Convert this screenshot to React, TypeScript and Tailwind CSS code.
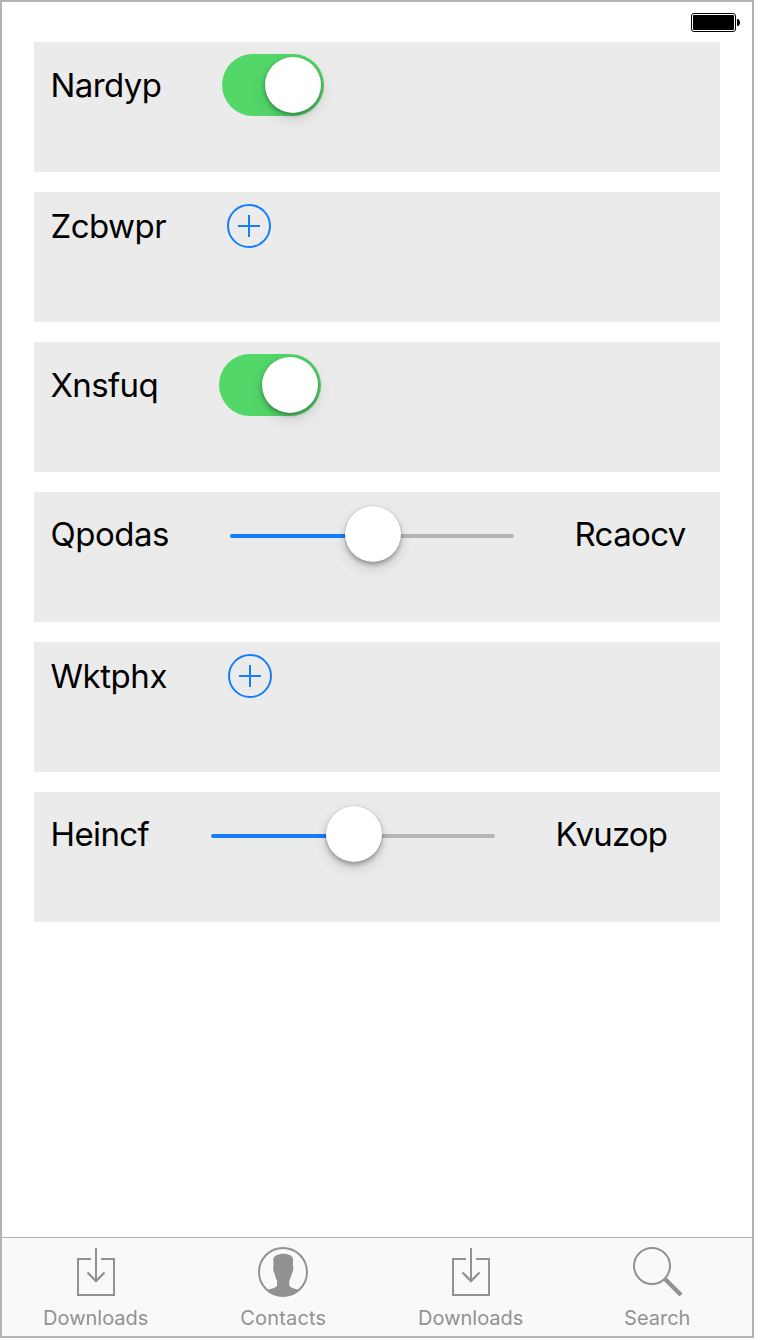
import type { ReactNode } from "react";

function Row({ children }: { children: ReactNode }) {
  return (
    <div className="flex h-[130px] items-start bg-[#ebebeb] pt-3 pl-4">
      <div className="flex items-center">{children}</div>
    </div>
  );
}

function Label({ text, className }: { text: string; className: string }) {
  return (
    <span className={`shrink-0 pl-[0.5px] text-[33px] leading-10 whitespace-nowrap text-black ${className}`}>
      {text}
    </span>
  );
}

function Toggle() {
  return (
    <div className="flex h-[62px] w-[102px] items-center justify-end rounded-full bg-[#53d769] pr-[3px]">
      <div className="size-14 rounded-full bg-white shadow-[0_6px_16px_rgba(0,0,0,0.13),0_2px_4px_rgba(0,0,0,0.35)]" />
    </div>
  );
}

function AddButton() {
  return (
    <svg className="size-11" viewBox="0 0 44 44" fill="none" stroke="#147efb" strokeWidth="2">
      <circle cx="22" cy="22" r="21" />
      <path d="M11 22H33M22 11V33" />
    </svg>
  );
}

function Slider() {
  return (
    <div className="flex h-[60px] w-[284px] items-center">
      <div className="mt-1 h-1 w-[115px] rounded-l-full bg-[#147efb]" />
      <div className="z-10 size-14 shrink-0 rounded-full bg-white shadow-[0_6px_14px_rgba(0,0,0,0.14),0_3px_4px_rgba(0,0,0,0.28),0_0_1px_rgba(0,0,0,0.3)]" />
      <div className="mt-1 h-1 flex-1 rounded-r-full bg-[#b5b5b5]" />
    </div>
  );
}

function DownloadIcon() {
  return (
    <svg className="size-[50px]" viewBox="0 0 50 50" fill="none" stroke="#929292" strokeWidth="2">
      <path d="M20 12H7V48H43V12H30" />
      <path d="M25 1V34" />
      <path d="M16.5 25.5L25 34L33.5 25.5" strokeWidth="2.3" />
    </svg>
  );
}

function ContactIcon() {
  return (
    <svg className="size-[50px]" viewBox="0 0 50 50">
      <circle cx="25" cy="25" r="24" fill="none" stroke="#929292" strokeWidth="2" />
      <path
        fill="#929292"
        d="M15.3 13C15.2 9 19.5 6.8 25.3 6.8S35.2 9 35.1 13L34.8 19.5C35.6 19.7 35.4 22 34.9 24C34.5 25.6 34.1 25.8 33.8 26.8C33.3 29.8 32.2 32 31.3 33.5V38C31.7 41 36 41.5 41.5 43C37 47.2 31.5 49 25 49S13 47.2 8.5 43C14 41.5 18.7 41 19.1 38V33.5C18.1 32 17 29.8 16.6 26.8C16.3 25.8 15.8 25.6 15.5 24C15 22 14.8 19.7 15.6 19.5Z"
      />
    </svg>
  );
}

function SearchIcon() {
  return (
    <svg className="size-[50px]" viewBox="0 0 50 50" fill="none" stroke="#929292">
      <circle cx="19" cy="19" r="18" strokeWidth="2" />
      <path d="M32 32L48 48" strokeWidth="4.2" />
    </svg>
  );
}

function Tab({ icon, label, className }: { icon: ReactNode; label: string; className: string }) {
  return (
    <div className="flex flex-1 flex-col items-center pt-[9px] text-[#929292]">
      {icon}
      <span className={`mt-[9px] text-[20px] leading-6 ${className}`}>{label}</span>
    </div>
  );
}

export default function App() {
  return (
    <div className="h-[1340px] w-[760px] bg-white font-['Inter',sans-serif]">
      <div className="flex h-[1338px] w-[754px] flex-col border-2 border-[#b3b3b3] bg-white">
        <div className="flex h-10 justify-end pt-[11px] pr-3">
          <svg className="h-[19px] w-[49px]" viewBox="0 0 49 19">
            <rect x="0.5" y="0.5" width="44" height="18" rx="2.5" fill="none" stroke="#000" />
            <rect x="2" y="2" width="41" height="15" rx="1" />
            <path d="M46 6H47Q49 6.5 49 9.5T47 13H46Z" />
          </svg>
        </div>
        <div className="flex flex-1 flex-col gap-5 pr-8 pl-8">
          <Row>
            <Label text="Nardyp" className="w-[172px] tracking-[-0.6px]" />
            <Toggle />
          </Row>
          <Row>
            <Label text="Zcbwpr" className="w-[177px] tracking-[-0.55px]" />
            <AddButton />
          </Row>
          <Row>
            <Label text="Xnsfuq" className="w-[169px] tracking-[-0.65px]" />
            <Toggle />
          </Row>
          <Row>
            <Label text="Qpodas" className="w-[180px] tracking-[-0.5px]" />
            <Slider />
            <Label text="Rcaocv" className="ml-[60px] tracking-[-0.65px]" />
          </Row>
          <Row>
            <Label text="Wktphx" className="w-[178px] tracking-[-0.45px]" />
            <AddButton />
          </Row>
          <Row>
            <Label text="Heincf" className="w-[161px] tracking-[-0.6px]" />
            <Slider />
            <Label text="Kvuzop" className="ml-[60px] tracking-[-0.85px]" />
          </Row>
        </div>
        <div className="flex h-[99px] border-t border-[#b2b2b2] bg-[#f9f9f9]">
          <Tab icon={<DownloadIcon />} label="Downloads" className="" />
          <Tab icon={<ContactIcon />} label="Contacts" className="tracking-[0.2px]" />
          <Tab icon={<DownloadIcon />} label="Downloads" className="" />
          <Tab icon={<SearchIcon />} label="Search" className="pr-[2px]" />
        </div>
      </div>
    </div>
  );
}
